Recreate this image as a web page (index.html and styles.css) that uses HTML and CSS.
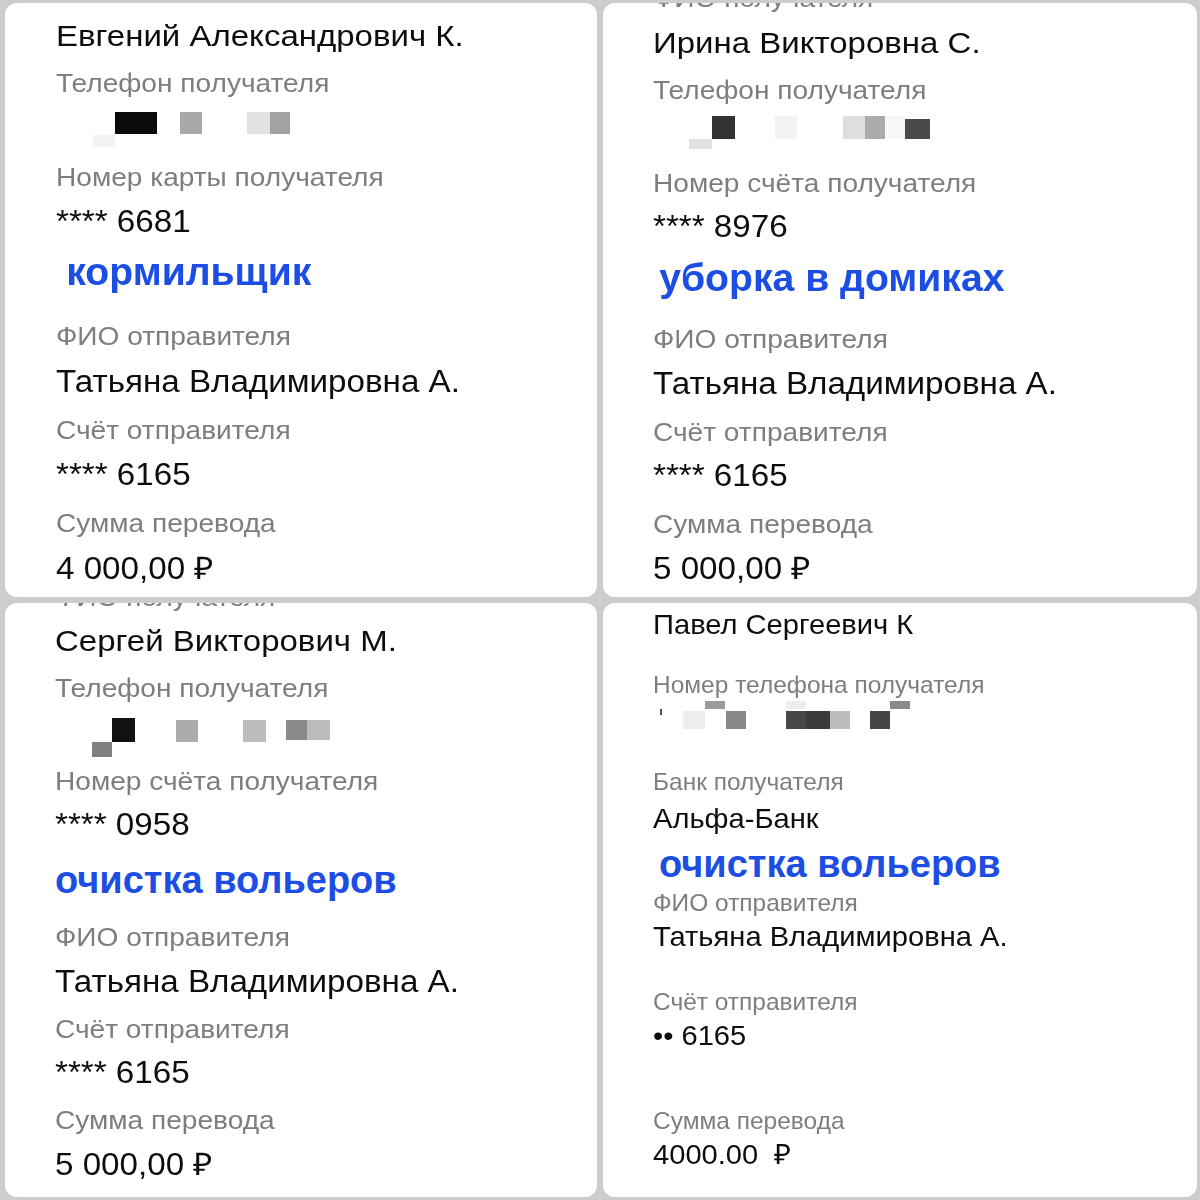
FILE: index.html
```html
<!DOCTYPE html>
<html lang="ru">
<head>
<meta charset="utf-8">
<title>Переводы</title>
<link rel="stylesheet" href="styles.css">
</head>
<body>
<div class="grid">
  <section class="card c1">
    <div class="name">Евгений Александрович К.</div>
    <div class="label mt-11">Телефон получателя</div>
    <div class="phone mt-4">
      <span class="px" style="left:37px;top:30px;width:22px;height:12px;background:#f2f2f2"></span>
      <span class="px" style="left:59px;top:7px;width:42px;height:22px;background:#0b0b0b"></span>
      <span class="px" style="left:124px;top:7px;width:22px;height:22px;background:#a9a9a9"></span>
      <span class="px" style="left:191px;top:7px;width:23px;height:22px;background:#e2e2e2"></span>
      <span class="px" style="left:214px;top:7px;width:20px;height:22px;background:#a2a2a2"></span>
    </div>
    <div class="label mt-18">Номер карты получателя</div>
    <div class="value mt-9">**** 6681</div>
    <div class="purpose mt-12 indent">кормильщик</div>
    <div class="label mt-26">ФИО отправителя</div>
    <div class="value mt-10">Татьяна Владимировна А.</div>
    <div class="label mt-12">Счёт отправителя</div>
    <div class="value mt-9">**** 6165</div>
    <div class="label mt-12">Сумма перевода</div>
    <div class="value mt-10">4 000,00 ₽</div>
  </section>

  <section class="card c2">
    <div class="label cut">ФИО получателя</div>
    <div class="name mt-9">Ирина Викторовна С.</div>
    <div class="label mt-11">Телефон получателя</div>
    <div class="phone mt-4">
      <span class="px" style="left:36px;top:27px;width:23px;height:10px;background:#e2e2e2"></span>
      <span class="px" style="left:59px;top:4px;width:23px;height:23px;background:#333"></span>
      <span class="px" style="left:122px;top:4px;width:22px;height:23px;background:#f3f3f3"></span>
      <span class="px" style="left:190px;top:4px;width:22px;height:23px;background:#dedede"></span>
      <span class="px" style="left:212px;top:4px;width:20px;height:23px;background:#ababab"></span>
      <span class="px" style="left:232px;top:4px;width:20px;height:23px;background:#f7f7f7"></span>
      <span class="px" style="left:252px;top:7px;width:25px;height:20px;background:#4a4a4a"></span>
    </div>
    <div class="label mt-17">Номер счёта получателя</div>
    <div class="value mt-8">**** 8976</div>
    <div class="purpose mt-13 indent-s">уборка в домиках</div>
    <div class="label mt-23">ФИО отправителя</div>
    <div class="value mt-9">Татьяна Владимировна А.</div>
    <div class="label mt-12">Счёт отправителя</div>
    <div class="value mt-8">**** 6165</div>
    <div class="label mt-12">Сумма перевода</div>
    <div class="value mt-9">5 000,00 ₽</div>
  </section>

  <section class="card c3">
    <div class="label cut">ФИО получателя</div>
    <div class="name mt-8">Сергей Викторович М.</div>
    <div class="label mt-11">Телефон получателя</div>
    <div class="phone mt-6">
      <span class="px" style="left:37px;top:30px;width:20px;height:15px;background:#808080"></span>
      <span class="px" style="left:57px;top:6px;width:23px;height:24px;background:#111"></span>
      <span class="px" style="left:121px;top:8px;width:22px;height:22px;background:#ababab"></span>
      <span class="px" style="left:188px;top:8px;width:23px;height:22px;background:#bdbdbd"></span>
      <span class="px" style="left:231px;top:8px;width:21px;height:20px;background:#8a8a8a"></span>
      <span class="px" style="left:252px;top:8px;width:23px;height:20px;background:#bcbcbc"></span>
    </div>
    <div class="label mt-15">Номер счёта получателя</div>
    <div class="value mt-8">**** 0958</div>
    <div class="purpose mt-17">очистка вольеров</div>
    <div class="label mt-19">ФИО отправителя</div>
    <div class="value mt-9">Татьяна Владимировна А.</div>
    <div class="label mt-11">Счёт отправителя</div>
    <div class="value mt-8">**** 6165</div>
    <div class="label mt-11">Сумма перевода</div>
    <div class="value mt-9">5 000,00 ₽</div>
  </section>

  <section class="card c4">
    <div class="s-name">Павел Сергеевич К</div>
    <div class="s-label mt-28">Номер телефона получателя</div>
    <div class="s-phone">
      <span class="px" style="left:7px;top:8px;width:2px;height:6px;background:#555"></span>
      <span class="px" style="left:30px;top:10px;width:22px;height:18px;background:#eeeeee"></span>
      <span class="px" style="left:52px;top:0;width:20px;height:8px;background:#9a9a9a"></span>
      <span class="px" style="left:73px;top:10px;width:20px;height:18px;background:#888"></span>
      <span class="px" style="left:133px;top:0;width:20px;height:8px;background:#eeeeee"></span>
      <span class="px" style="left:133px;top:10px;width:20px;height:18px;background:#474747"></span>
      <span class="px" style="left:153px;top:10px;width:24px;height:18px;background:#3b3b3b"></span>
      <span class="px" style="left:177px;top:10px;width:20px;height:18px;background:#bdbdbd"></span>
      <span class="px" style="left:217px;top:10px;width:20px;height:18px;background:#454545"></span>
      <span class="px" style="left:237px;top:0;width:20px;height:8px;background:#8a8a8a"></span>
    </div>
    <div class="s-label mt-33">Банк получателя</div>
    <div class="s-value mt-5">Альфа-Банк</div>
    <div class="purpose mt-9 indent-s">очистка вольеров</div>
    <div class="s-label mt-3">ФИО отправителя</div>
    <div class="s-value mt-2">Татьяна Владимировна А.</div>
    <div class="s-label mt-33">Счёт отправителя</div>
    <div class="s-value mt-2">•• 6165</div>
    <div class="s-label mt-53">Сумма перевода</div>
    <div class="s-value mt-2">4000.00&nbsp; ₽</div>
  </section>
</div>
</body>
</html>
```

FILE: styles.css
```css
* { box-sizing: border-box; }
html, body { margin: 0; padding: 0; }
body {
  width: 1200px;
  height: 1200px;
  background: #cdcdcd;
  font-family: "Liberation Sans", Arial, sans-serif;
  overflow: hidden;
}
.grid {
  display: grid;
  grid-template-columns: 592px 594px;
  grid-template-rows: 594px 594px;
  gap: 6px;
  padding: 3px 3px 3px 5px;
}
.card {
  background: #fff;
  border-radius: 12px;
  display: flex;
  flex-direction: column;
  overflow: hidden;
  padding-left: 51px;
}
.c1 { padding-top: 15px; }
.c2 { padding-left: 50px; }
.c3 { padding-left: 50px; }
.c4 { padding-left: 50px; padding-top: 6px; }

.name, .label, .value, .purpose, .s-name, .s-label, .s-value {
  white-space: nowrap;
  transform-origin: left center;
  flex-shrink: 0;
}
.name, .label, .value {
  height: 36px;
  line-height: 36px;
}
.name { font-size: 30px; color: #0d0d0d; transform: scaleX(1.1); }
.label { font-size: 26px; color: #7e7e7e; transform: scaleX(1.08); }
.value { font-size: 31px; color: #0d0d0d; transform: scaleX(1.07); }
.purpose {
  height: 40px;
  line-height: 40px;
  font-size: 38px;
  font-weight: 700;
  color: #1c4ee4;
  transform: scaleX(1.03);
}
.c3 .purpose, .c4 .purpose { transform: none; }
.indent { padding-left: 10px; }
.indent-s { padding-left: 6px; }
.cut { margin-top: -24px; }
.c2 .cut { margin-top: -23px; }

.phone {
  position: relative;
  height: 36px;
  flex-shrink: 0;
  filter: blur(0.6px);
}
.s-phone {
  position: relative;
  height: 32px;
  flex-shrink: 0;
  filter: blur(0.6px);
}
.px { position: absolute; display: block; }

.s-name, .s-label, .s-value {
  height: 32px;
  line-height: 32px;
}
.s-name { font-size: 28px; color: #0d0d0d; transform: scaleX(1.04); }
.s-label { font-size: 24px; color: #7e7e7e; transform: scaleX(1.02); }
.s-value { font-size: 28px; color: #0d0d0d; transform: scaleX(1.04); }

.mt-2 { margin-top: 2px; }
.mt-3 { margin-top: 3px; }
.mt-4 { margin-top: 4px; }
.mt-5 { margin-top: 5px; }
.mt-6 { margin-top: 6px; }
.mt-8 { margin-top: 8px; }
.mt-9 { margin-top: 9px; }
.mt-10 { margin-top: 10px; }
.mt-11 { margin-top: 11px; }
.mt-12 { margin-top: 12px; }
.mt-13 { margin-top: 13px; }
.mt-15 { margin-top: 15px; }
.mt-17 { margin-top: 17px; }
.mt-18 { margin-top: 18px; }
.mt-19 { margin-top: 19px; }
.mt-23 { margin-top: 23px; }
.mt-26 { margin-top: 26px; }
.mt-28 { margin-top: 28px; }
.mt-33 { margin-top: 33px; }
.mt-53 { margin-top: 53px; }
```
